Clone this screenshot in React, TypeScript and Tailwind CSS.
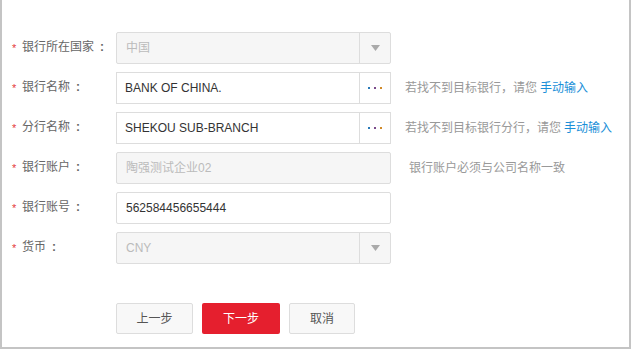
import React from "react";

const font = { fontFamily: '"Liberation Sans", "Noto Sans CJK SC", sans-serif' };

function Label({ text }: { text: string }) {
  return (
    <div className="flex w-[106px] shrink-0 items-center pl-[2px] pb-[2px] text-[12px] text-[#666]">
      <span className="w-[10px] pt-[2px] text-[11px] text-[#e4393c]">*</span>
      <span>{text}</span>
      <span className="ml-[6px] font-bold">:</span>
    </div>
  );
}

function Caret() {
  return (
    <div className="flex w-[31px] items-center justify-center border-l border-[#ddd]">
      <svg width="9" height="6" viewBox="0 0 9 6">
        <path d="M0 0 L9 0 L4.5 6 Z" fill="#aaa" />
      </svg>
    </div>
  );
}

function Dots() {
  return (
    <div className="flex w-[31px] items-center justify-center gap-[4px] border-l border-[#ddd]">
      <span className="h-[2px] w-[2px] bg-[#2a7ab8]" />
      <span className="h-[2px] w-[2px] bg-[#7a4a8a]" />
      <span className="h-[2px] w-[2px] bg-[#d08a2a]" />
    </div>
  );
}

function Hint({ text, link, ml }: { text: string; link?: string; ml: string }) {
  return (
    <div className={`${ml} text-[12px] text-[#999]`}>
      {text}
      {link && <span className="ml-[3px] text-[#1a8fd8]">{link}</span>}
    </div>
  );
}

export default function App() {
  return (
    <div
      className="h-[349px] w-[631px] border-x-2 border-b-2 border-[#c4c4c4] bg-white pl-[8px] pt-[32px]"
      style={font}
    >
      <div className="mb-[8px] flex h-[32px] items-center">
        <Label text="银行所在国家" />
        <div className="flex h-[32px] w-[275px] rounded-[2px] border border-[#ddd] bg-[#f6f6f6]">
          <div className="flex flex-1 items-center pl-[9px] text-[12px] text-[#bbb]">中国</div>
          <Caret />
        </div>
      </div>

      <div className="mb-[8px] flex h-[32px] items-center">
        <Label text="银行名称" />
        <div className="flex h-[32px] w-[275px] border border-[#ddd] bg-white">
          <div className="flex flex-1 items-center pl-[8px] text-[12px] text-[#333]">BANK OF CHINA.</div>
          <Dots />
        </div>
        <Hint ml="ml-[14px]" text="若找不到目标银行，请您" link="手动输入" />
      </div>

      <div className="mb-[8px] flex h-[32px] items-center">
        <Label text="分行名称" />
        <div className="flex h-[32px] w-[275px] border border-[#ddd] bg-white">
          <div className="flex flex-1 items-center pl-[8px] text-[12px] text-[#333]">SHEKOU SUB-BRANCH</div>
          <Dots />
        </div>
        <Hint ml="ml-[14px]" text="若找不到目标银行分行，请您" link="手动输入" />
      </div>

      <div className="mb-[8px] flex h-[32px] items-center">
        <Label text="银行账户" />
        <div className="flex h-[32px] w-[275px] items-center rounded-[2px] border border-[#ddd] bg-[#f6f6f6] pl-[9px] text-[12px] text-[#bbb]">
          陶强测试企业02
        </div>
        <Hint ml="ml-[18px]" text="银行账户必须与公司名称一致" />
      </div>

      <div className="mb-[8px] flex h-[32px] items-center">
        <Label text="银行账号" />
        <div className="flex h-[32px] w-[275px] items-center rounded-[2px] border border-[#ddd] bg-white pl-[9px] text-[12px] text-[#333]">
          562584456655444
        </div>
      </div>

      <div className="mb-[8px] flex h-[32px] items-center">
        <Label text="货币" />
        <div className="flex h-[32px] w-[275px] rounded-[2px] border border-[#ddd] bg-[#f6f6f6]">
          <div className="flex flex-1 items-center pl-[9px] text-[12px] text-[#bbb]">CNY</div>
          <Caret />
        </div>
      </div>

      <div className="ml-[106px] mt-[39px] flex gap-[9px] text-[12px]">
        <button className="h-[31px] w-[77px] rounded-[2px] border border-[#ddd] bg-[#f8f8f8] text-[#555]">上一步</button>
        <button className="h-[31px] w-[78px] rounded-[2px] bg-[#e51f2e] text-white">下一步</button>
        <button className="h-[31px] w-[66px] rounded-[2px] border border-[#ddd] bg-[#f8f8f8] text-[#555]">取消</button>
      </div>
    </div>
  );
}
